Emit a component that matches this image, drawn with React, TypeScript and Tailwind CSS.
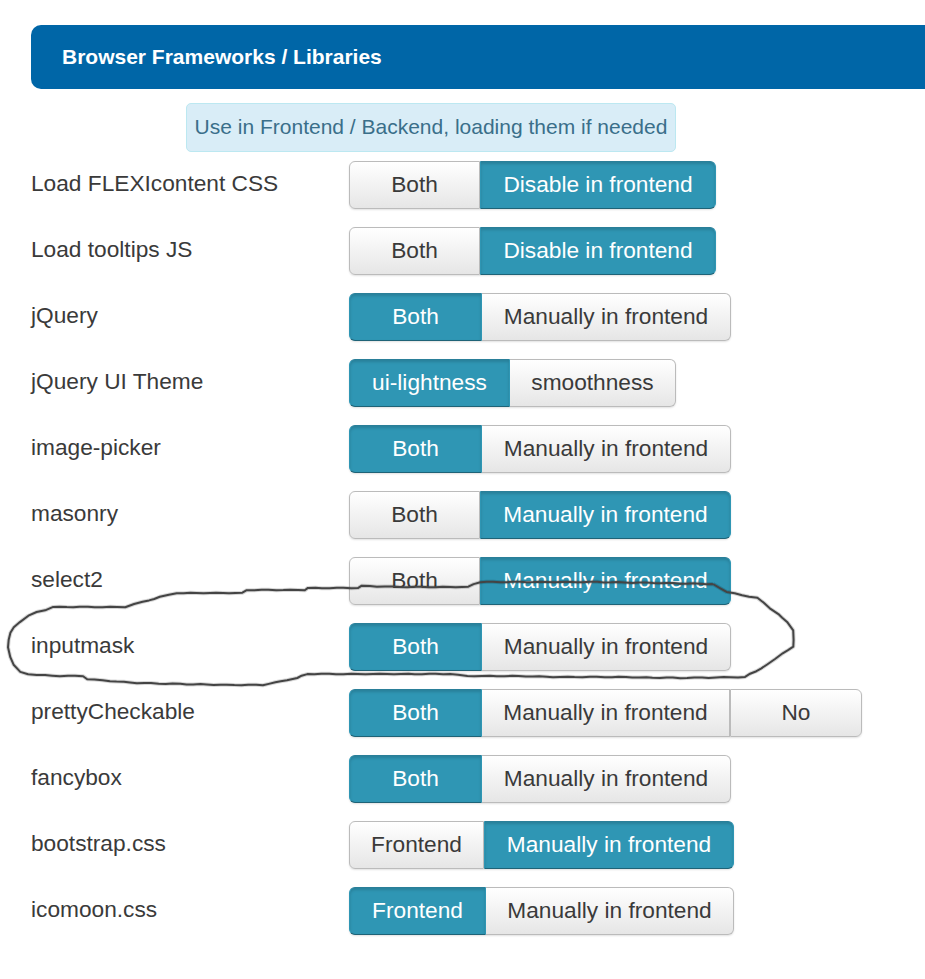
const bothOn = { text: 'Both', on: true, width: 'w-[133px]' };
const bothOff = { text: 'Both', on: false, width: 'w-[131px]' };
const manualOff = { text: 'Manually in frontend', on: false, width: 'w-[249px]' };
const manualOn = { text: 'Manually in frontend', on: true, width: 'w-[251px]' };
const disableOn = { text: 'Disable in frontend', on: true, width: 'w-[236px]' };

const rows = [
  { label: 'Load FLEXIcontent CSS', options: [bothOff, disableOn] },
  { label: 'Load tooltips JS', options: [bothOff, disableOn] },
  { label: 'jQuery', options: [bothOn, manualOff] },
  {
    label: 'jQuery UI Theme',
    options: [
      { text: 'ui-lightness', on: true, width: 'w-[161px]' },
      { text: 'smoothness', on: false, width: 'w-[166px]' },
    ],
  },
  { label: 'image-picker', options: [bothOn, manualOff] },
  { label: 'masonry', options: [bothOff, manualOn] },
  { label: 'select2', options: [bothOff, manualOn] },
  { label: 'inputmask', options: [bothOn, manualOff] },
  {
    label: 'prettyCheckable',
    options: [bothOn, { ...manualOff, width: 'w-[248px]' }, { text: 'No', on: false, width: 'w-[132px]' }],
  },
  { label: 'fancybox', options: [bothOn, manualOff] },
  {
    label: 'bootstrap.css',
    options: [
      { text: 'Frontend', on: false, width: 'w-[135px]' },
      { ...manualOn, width: 'w-[250px]' },
    ],
  },
  {
    label: 'icomoon.css',
    options: [
      { text: 'Frontend', on: true, width: 'w-[137px]' },
      { ...manualOff, width: 'w-[248px]' },
    ],
  },
];

// hand drawn ring round the inputmask row
const ringPoints = [
  [713, 584], [720, 588], [727, 592], [742, 595], [757, 598], [764, 603], [770, 608], [778, 614], [787, 622],
  [793, 630], [794, 640], [793, 647], [783, 653], [775, 659], [767, 665], [756, 671], [745, 677], [680, 678],
  [612, 677], [560, 677], [512, 676], [467, 676], [450, 674], [380, 674], [307, 674], [297, 678], [287, 680],
  [263, 685], [227, 685], [180, 684], [137, 683], [110, 681], [87, 679], [83, 676], [60, 676], [37, 675],
  [28, 674], [20, 672], [14, 665], [10, 657], [8, 647], [9, 640], [10, 633], [14, 627], [20, 622], [28, 616],
  [37, 612], [45, 610], [53, 607], [80, 607], [125, 607], [134, 604], [143, 602], [160, 597], [177, 593],
  [210, 593], [242, 593], [247, 590], [305, 590], [308, 588], [358, 588], [362, 586], [400, 587], [450, 587],
  [468, 587], [474, 584], [480, 582], [540, 582], [597, 582], [660, 583], [713, 584],
];

// mouse jitter: split long segments and shake them a little
function shakyPath(points: number[][]) {
  let d = `M${points[0][0]} ${points[0][1]}`;
  let n = 0;
  for (let i = 1; i < points.length; i++) {
    const [x0, y0] = points[i - 1];
    const [x1, y1] = points[i];
    const steps = Math.max(1, Math.round(Math.hypot(x1 - x0, y1 - y0) / 7));
    for (let s = 1; s <= steps; s++) {
      n++;
      const x = x0 + ((x1 - x0) * s) / steps + Math.sin(n * 2.3) * 0.4;
      const y = y0 + ((y1 - y0) * s) / steps + Math.sin(n * 1.7) * 0.35;
      d += ` L${x.toFixed(1)} ${y.toFixed(1)}`;
    }
  }
  return d;
}

const ring = shakyPath(ringPoints);

export default function App() {
  return (
    <div className="relative h-[979px] w-[925px] overflow-hidden bg-white font-['Liberation_Sans',Arial,sans-serif] text-[#333333]">
      <div className="pt-[25px] pl-[31px]">
        <div className="flex h-[64px] w-[1000px] items-center rounded-[10px] bg-[#0066a7] pl-[31px] text-[21px] font-bold text-white">
          Browser Frameworks / Libraries
        </div>
      </div>

      <div className="mt-[14px] ml-[186px] flex h-[49px] w-[490px] items-center justify-center rounded-[5px] border border-[#bce8f1] bg-[#d9edf7] pb-[2px] text-[21px] whitespace-nowrap text-[#3a6f8a]">
        Use in Frontend / Backend, loading them if needed
      </div>

      <div className="mt-[9px] pl-[31px]">
        {rows.map((row) => (
          <div key={row.label} className="flex h-[66px] items-start">
            <div className="w-[318px] text-[22.7px] leading-[44px] text-[#3a3a3a]">{row.label}</div>
            <div className="flex rounded-[6px] shadow-[0_1px_2px_rgba(0,0,0,0.12)]">
              {row.options.map((option, i) => (
                <div
                  key={option.text}
                  className={[
                    'box-border flex h-[48px] items-center justify-center border pb-[2px] text-[22.7px]',
                    option.width,
                    i === 0 ? 'rounded-l-[6px]' : '',
                    i === row.options.length - 1 ? 'rounded-r-[6px]' : '',
                    i > 0 && !option.on && !row.options[i - 1].on ? 'border-l-[#bbbbbb]' : '',
                    i > 0 && !option.on && row.options[i - 1].on ? 'border-l-0' : '',
                    option.on
                      ? 'border-[#2f96b4] border-t-[#2a7f99] border-b-[#1f6377] bg-[#2f96b4] text-white shadow-[inset_0_2px_3px_rgba(0,0,0,0.15)]'
                      : 'border-[#bbbbbb] bg-gradient-to-b from-white to-[#e6e6e6] text-[#3a3a3a]',
                  ].join(' ')}
                >
                  {option.text}
                </div>
              ))}
            </div>
          </div>
        ))}
      </div>

      <svg className="absolute top-0 left-0" width="925" height="979" fill="none">
        <path d={ring} stroke="#000000" strokeOpacity="0.16" strokeWidth="4" strokeLinejoin="round" />
        <path d={ring} stroke="#444444" strokeWidth="2" strokeLinejoin="round" />
      </svg>
    </div>
  );
}
